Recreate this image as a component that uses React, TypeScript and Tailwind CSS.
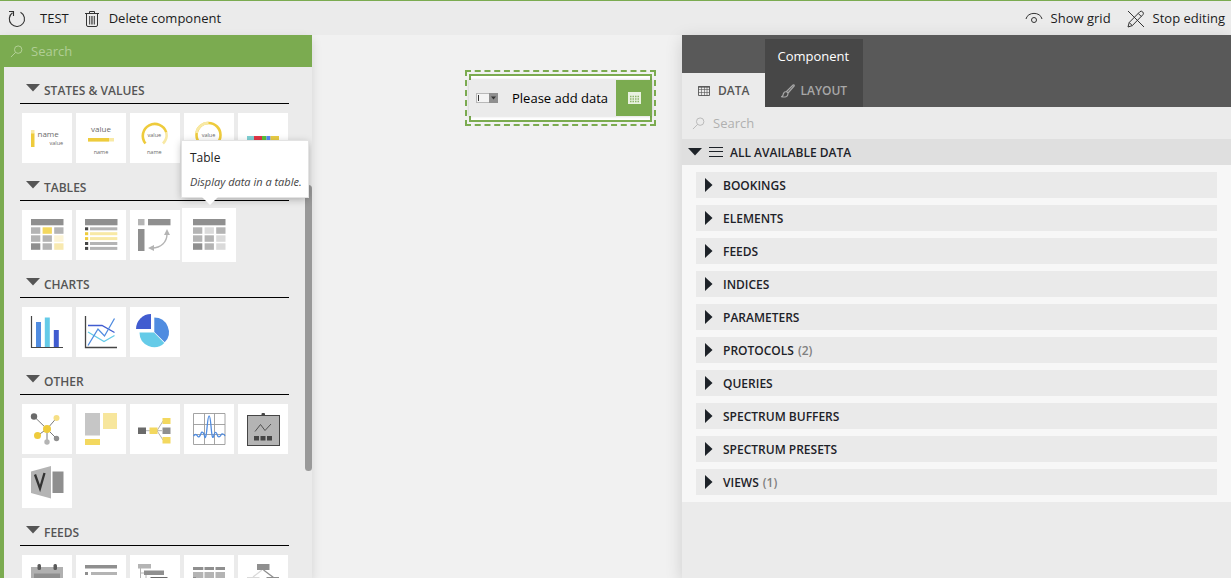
import React, { useState } from 'react';

interface Tile {
  name: string;
  desc: string;
  art: React.ReactNode;
}

interface Section {
  title: string;
  tiles: Tile[];
}

const Cells = ({ fills }: { fills: string[] }) => (
  <>
    <rect x="9" y="9" width="32.500" height="6.300" fill="#8f8f8f" />
    {fills.map((f, i) => (
      <rect key={i} x={9 + (i % 3) * 11.6} y={17.3 + Math.floor(i / 3) * 8} width="9.300" height="6.500" fill={f} />
    ))}
  </>
);

const SECTIONS: Section[] = [
  {
    title: 'STATES & VALUES',
    tiles: [
      {
        name: 'State',
        desc: 'Display a state.',
        art: (
          <>
            <rect x="9" y="17" width="3.5" height="4" fill="#f8e9a5" />
            <rect x="9" y="20.5" width="3.5" height="13.5" fill="#eecb3c" />
            <text x="15.5" y="24" fontSize="8" fill="#6a6a6a">name</text>
            <text x="27.5" y="32" fontSize="5.5" fill="#6a6a6a">value</text>
          </>
        ),
      },
      {
        name: 'Progress bar',
        desc: 'Display a value.',
        art: (
          <>
            <text x="25" y="19" fontSize="8" textAnchor="middle" fill="#6a6a6a">value</text>
            <rect x="12" y="25" width="26" height="3.5" fill="#f8e9a5" />
            <rect x="12" y="25" width="21" height="3.5" fill="#eecb3c" />
            <text x="25" y="41" fontSize="5.5" textAnchor="middle" fill="#6a6a6a">name</text>
          </>
        ),
      },
      {
        name: 'Gauge',
        desc: 'Display a gauge.',
        art: (
          <>
            <path d="M15.5 30.5A12 12 0 1 1 36.3 19.5" fill="none" stroke="#eecb3c" strokeWidth="2.6" />
            <path d="M36.3 19.5A12 12 0 0 1 33 30.5" fill="none" stroke="#f8e9a5" strokeWidth="2.6" />
            <text x="24.3" y="24" fontSize="5.5" textAnchor="middle" fill="#6a6a6a">value</text>
            <text x="24.3" y="41" fontSize="5.5" textAnchor="middle" fill="#6a6a6a">name</text>
          </>
        ),
      },
      {
        name: 'Ring',
        desc: 'Display a ring.',
        art: (
          <>
            <circle cx="24.500" cy="22" r="12" fill="none" stroke="#eecb3c" strokeWidth="2.6" />
            <path d="M12.500 20A12 12 0 0 1 24.500 10" fill="none" stroke="#f8e9a5" strokeWidth="2.8" />
            <text x="24.500" y="24" fontSize="5.5" textAnchor="middle" fill="#6a6a6a">value</text>
          </>
        ),
      },
      {
        name: 'Timeline',
        desc: 'Display states over time.',
        art: (
          <>
            <rect x="9" y="23" width="7" height="5" fill="#7fd0d3" />
            <rect x="16" y="23" width="8" height="5" fill="#e03545" />
            <rect x="24" y="23" width="4.5" height="5" fill="#5bc236" />
            <rect x="28.5" y="23" width="4" height="5" fill="#5588f5" />
            <rect x="32.5" y="23" width="8.5" height="5" fill="#e8cc45" />
          </>
        ),
      },
    ],
  },
  {
    title: 'TABLES',
    tiles: [
      {
        name: 'Alarm table',
        desc: 'Display alarms in a table.',
        art: <Cells fills={['#b4b4b4', '#f3d85f', '#b4b4b4', '#b4b4b4', '#b4b4b4', '#fcf4d6', '#8f8f8f', '#b4b4b4', '#f8e9b0']} />,
      },
      {
        name: 'List',
        desc: 'Display data in a list.',
        art: (
          <>
            <rect x="9" y="9" width="32.500" height="6.300" fill="#8f8f8f" />
            {[0, 1, 2, 3, 4].map((i) => {
              const hot = i === 1 || i === 2;
              return (
                <g key={i}>
                  <rect x="9" y={17.3 + i * 4.9} width="3.200" height="3" fill={hot ? '#eecb3c' : '#454545'} />
                  <rect x="14" y={17.3 + i * 4.9} width="27.300" height="3" fill={hot ? '#f8e9a5' : '#b4b4b4'} />
                </g>
              );
            })}
          </>
        ),
      },
      {
        name: 'Pivot table',
        desc: 'Display data in a pivot table.',
        art: (
          <>
            <rect x="8" y="9" width="6.5" height="6.300" fill="#b4b4b4" />
            <rect x="18" y="9" width="22.5" height="6.300" fill="#8f8f8f" />
            <rect x="8" y="19" width="6.5" height="22" fill="#8f8f8f" />
            <path d="M22 38C31 38 37 32 37 24" fill="none" stroke="#b4b4b4" strokeWidth="1.4" />
            <path d="M18 38l6-3v6zM37 19l-3 6h6z" fill="#b4b4b4" />
          </>
        ),
      },
      {
        name: 'Table',
        desc: 'Display data in a table.',
        art: <Cells fills={['#b4b4b4', '#dadada', '#b4b4b4', '#b4b4b4', '#b4b4b4', '#dadada', '#8f8f8f', '#b4b4b4', '#dadada']} />,
      },
    ],
  },
  {
    title: 'CHARTS',
    tiles: [
      {
        name: 'Column chart',
        desc: 'Display a column chart.',
        art: (
          <>
            <path d="M14 15h5v25h-5z" fill="#508ce0" />
            <path d="M22.800 10.500h5V40h-5z" fill="#65cbe8" />
            <path d="M31.800 23h5v17h-5z" fill="#415cd0" />
            <path d="M9.5 9v31.5H41" fill="none" stroke="#454545" strokeWidth="1.2" />
          </>
        ),
      },
      {
        name: 'Line chart',
        desc: 'Display a line chart.',
        art: (
          <g fill="none" strokeWidth="1.3">
            <path d="M12 25l16 9.5 10.500-6" stroke="#65cbe8" />
            <path d="M12 18.500h14l12.500 7" stroke="#415cd0" />
            <path d="M12 38.500L22 22l6.500 7 10-17.500" stroke="#508ce0" />
            <path d="M9.500 9v31.500H41" stroke="#454545" />
          </g>
        ),
      },
      {
        name: 'Pie chart',
        desc: 'Display a pie chart.',
        art: (
          <>
            <path d="M24.300 25V10.500A14.600 14.600 0 0 1 34.700 35.300z" fill="#508ce0" />
            <path d="M24 25.500L34.300 35.900A14.600 14.600 0 0 1 9.500 25.500z" fill="#65cbe8" />
            <path d="M21 22H6A15 15 0 0 1 21 7z" fill="#415cd0" />
          </>
        ),
      },
    ],
  },
  {
    title: 'OTHER',
    tiles: [
      {
        name: 'Node edge graph',
        desc: 'Display nodes and edges.',
        art: (
          <>
            <path d="M25 25L12 12.500M25 25l9.500-11M25 25l-9.500 6.500M25 25v13M25 25l9.500 9.500" stroke="#6a6a6a" strokeWidth="0.9" />
            <circle cx="12" cy="12.500" r="3.200" fill="#6a6a6a" />
            <circle cx="34.500" cy="14" r="3" fill="#f6df85" />
            <circle cx="15.500" cy="31.500" r="3.500" fill="#eecb3c" />
            <circle cx="25" cy="38" r="2.700" fill="#b4b4b4" />
            <circle cx="34.500" cy="34.500" r="2.700" fill="#8f8f8f" />
            <circle cx="25" cy="25" r="4" fill="#eecb3c" />
          </>
        ),
      },
      {
        name: 'Grid',
        desc: 'Display a grid.',
        art: (
          <>
            <rect x="9" y="9" width="15" height="22.500" fill="#c6c6c6" />
            <rect x="27" y="9" width="14" height="16" fill="#f7e69c" />
            <rect x="9" y="35" width="15" height="6" fill="#f3d85f" />
          </>
        ),
      },
      {
        name: 'Service chain',
        desc: 'Display a service chain.',
        art: (
          <>
            <path d="M16 26.700h16M27 26.700L33 17M27 26.700L33 36" fill="none" stroke="#b4b4b4" />
            <rect x="8" y="23.500" width="8" height="6.500" fill="#6a6a6a" />
            <rect x="19.500" y="23.500" width="8" height="6.500" fill="#f3d85f" />
            <rect x="32.500" y="14" width="8" height="6" fill="#f3d85f" />
            <rect x="32.500" y="23.500" width="8" height="6.500" fill="#8f8f8f" />
            <rect x="32.500" y="33" width="8" height="6.500" fill="#f3d85f" />
          </>
        ),
      },
      {
        name: 'Spectrum analyzer',
        desc: 'Display a spectrum.',
        art: (
          <>
            <path d="M9.500 9.500h31.500v31h-31.500zM20.500 9.500v31M30.500 9.500v31M9.500 20.500h31.500M9.500 30.500h31.500" fill="none" stroke="#9a9a9a" strokeWidth="0.9" />
            <path
              d="M9.500 32C11 30 12.500 30 13.500 32S16 32.500 17 29.500 20 29 20.500 32C21.500 37 22.500 30 23.200 22 24.500 8.500 25.800 8.500 27 22 27.800 31 28.500 37 30 31 31 27 32.500 28 33.300 31S36 33 37 31 40 30 41 32"
              fill="none"
              stroke="#508ce0"
              strokeWidth="1.300"
            />
          </>
        ),
      },
      {
        name: 'Maintenance settings',
        desc: 'Display settings.',
        art: (
          <>
            <rect x="23.500" y="9" width="3.500" height="3" rx="1" fill="#454545" />
            <rect x="9.500" y="11.500" width="32" height="30" fill="#b4b4b4" stroke="#454545" />
            <path d="M17 27.500l5.500-7 4.500 6 6-6.500" fill="none" stroke="#454545" strokeWidth="0.900" />
            <path d="M16 32h5v4.500h-5zM22.500 32h5v4.500h-5zM29 32h5v4.500h-5z" fill="#454545" />
          </>
        ),
      },
      {
        name: 'Visual overview',
        desc: 'Display a visual overview.',
        art: (
          <>
            <path d="M9 13.500L29 8v32.500L9 35z" fill="#b4b4b4" />
            <rect x="30.500" y="13.500" width="11" height="21.500" fill="#8f8f8f" />
            <path d="M13 16.500l5 14 4.500-15.500" fill="none" stroke="#333" strokeWidth="2.300" />
          </>
        ),
      },
    ],
  },
  {
    title: 'FEEDS',
    tiles: [
      {
        name: 'Calendar',
        desc: 'Pick a date.',
        art: (
          <>
            <rect x="9" y="12" width="32" height="29" fill="#b0b0b0" />
            <rect x="12" y="18.500" width="26" height="19" fill="#8f8f8f" />
            <rect x="15.500" y="9" width="3.500" height="6" rx="1.500" fill="#5a5a5a" />
            <rect x="31.500" y="9" width="3.500" height="6" rx="1.500" fill="#5a5a5a" />
          </>
        ),
      },
      {
        name: 'List feed',
        desc: 'Pick from a list.',
        art: (
          <>
            <rect x="9" y="10" width="32" height="3.500" fill="#8f8f8f" />
            <path d="M9 17h3v3H9zM9 23h3v3H9zM9 29h3v3H9z" fill="#8f8f8f" />
            <path d="M15 17h26v3H15zM15 23h26v3H15zM15 29h26v3H15z" fill="#b4b4b4" />
          </>
        ),
      },
      {
        name: 'Tree feed',
        desc: 'Pick from a tree.',
        art: (
          <>
            <path d="M10.500 13v22M10.500 18h4M16 20v6h5" fill="none" stroke="#b4b4b4" />
            <rect x="8" y="9" width="13" height="4.500" fill="#b4b4b4" />
            <rect x="14" y="15.500" width="20" height="4.500" fill="#8f8f8f" />
            <rect x="20.500" y="22" width="17" height="5" fill="#6a6a6a" />
          </>
        ),
      },
      {
        name: 'Time feed',
        desc: 'Pick a time slot.',
        art: (
          <>
            <path d="M9 12h10.300v3H9zM20.500 12h9.500v3h-9.500zM31.500 12h9.500v3h-9.500z" fill="#8f8f8f" />
            <path d="M9 17h10.300v7H9zM20.500 17h9.500v7h-9.500zM31.500 17h9.500v7h-9.500z" fill="#b4b4b4" />
            <rect x="9" y="22" width="3" height="6" fill="#8f8f8f" />
          </>
        ),
      },
      {
        name: 'Trigger feed',
        desc: 'Trigger an update.',
        art: (
          <>
            <path d="M24 15l-9 7" stroke="#dadada" strokeWidth="1.300" />
            <path d="M25.500 15l10 7.500" stroke="#8f8f8f" strokeWidth="1.300" />
            <rect x="19" y="9" width="12.500" height="6" fill="#8f8f8f" />
            <rect x="9" y="22" width="12.500" height="6" fill="#dadada" />
            <rect x="28.500" y="22" width="12.500" height="6" fill="#8f8f8f" />
          </>
        ),
      },
    ],
  },
];

const DATA_SOURCES: { label: string; count?: number }[] = [
  { label: 'BOOKINGS' },
  { label: 'ELEMENTS' },
  { label: 'FEEDS' },
  { label: 'INDICES' },
  { label: 'PARAMETERS' },
  { label: 'PROTOCOLS', count: 2 },
  { label: 'QUERIES' },
  { label: 'SPECTRUM BUFFERS' },
  { label: 'SPECTRUM PRESETS' },
  { label: 'VIEWS', count: 1 },
];

const SearchIcon = ({ className }: { className: string }) => (
  <svg viewBox="0 0 14 14" className={className} fill="none" stroke="currentColor">
    <circle cx="8.800" cy="5" r="4" />
    <path d="M6 8L1 13" />
  </svg>
);

const TriangleDown = ({ className }: { className: string }) => (
  <svg viewBox="0 0 14 8" className={className} fill="currentColor">
    <path d="M0 0h14L7 7.500z" />
  </svg>
);

const GridIcon = ({ className }: { className: string }) => (
  <svg viewBox="0 0 12 12" className={className} fill="none" stroke="currentColor">
    <path d="M.5 1.500h11v9H.5z" strokeWidth="0.900" />
    <path d="M0 2h12" strokeWidth="1.200" />
    <path d="M.5 4.500h11M.5 7.500h11M3.500 2v9M6.500 2v9M9 2v9" strokeWidth="0.600" />
  </svg>
);

// ── top bar ──
const Toolbar = () => (
  <header className="flex h-[35px] shrink-0 items-center justify-between border-t border-[#7bab50] bg-[#ebebeb] pl-2 pr-1.5 pt-0.5 text-[#1c1c1c]">
    <div className="flex items-center gap-4">
      <button className="flex items-center gap-[14px]">
        <svg viewBox="0 0 18 18" className="size-[18px]" fill="none" stroke="#333" strokeWidth="1.100">
          <path d="M4.500 2.700A7.600 7.600 0 1 0 12.500 2.200M1 1.500h4.500V6" />
        </svg>
        TEST
      </button>
      <button className="flex items-center gap-2.5">
        <svg viewBox="0 0 14 18" className="h-[18px] w-[14px]" fill="none" stroke="#333">
          <path d="M0 3.500h14M4.500 3.500V1.500h5v2M1.500 3.500v11.500q0 1.500 1.500 1.500h8q1.500 0 1.500-1.500V3.500" />
          <path d="M4.500 6v8.500M6.300 6v8.500M7.800 6v8.500M9.500 6v8.500" strokeWidth="0.800" />
        </svg>
        Delete component
      </button>
    </div>
    <div className="flex items-center gap-4">
      <button className="flex items-center gap-2">
        <svg viewBox="0 0 18 18" className="size-[18px]" fill="none" stroke="#333">
          <path d="M1 9C2.500 1.500 15.500 1.500 17 9" />
          <circle cx="9" cy="10" r="2.500" />
        </svg>
        Show grid
      </button>
      <button className="flex items-center gap-2">
        <svg viewBox="0 0 18 18" className="size-[18px]" fill="none" stroke="#333">
          <path d="M1 17l1.200-4.500L13 1.600q1.400-1 2.700.3t.3 2.700L5.300 15.600zM11.300 3.500l3 3M2.200 12.500l3.100 3.100M1 1l16 16" />
        </svg>
        Stop editing
      </button>
    </div>
  </header>
);

// ── component library on the left ──
const Tooltip = ({ tile }: { tile: Tile }) => (
  <div role="tooltip" className="absolute bottom-full left-0 z-10 mb-[11px] w-max bg-white pb-[3px] pl-2 pr-1.5 pt-[5px] text-left shadow-[0_0_0_1px_#e3e3e3,0_2px_8px_rgba(0,0,0,0.3)]">
    <p className="text-xs leading-6 text-[#222]">{tile.name}</p>
    <p className="text-[11px] italic leading-6 text-[#444]">{tile.desc}</p>
    <svg viewBox="0 0 16 8" className="absolute left-5 top-full h-2 w-4" fill="#fff">
      <path d="M0 0h16L8 8z" />
    </svg>
  </div>
);

const Library = () => {
  const [hovered, setHovered] = useState('Table');

  return (
    <aside className="z-10 flex w-[312px] shrink-0 flex-col shadow-[0_4px_10px_rgba(0,0,0,0.12)]">
      <label className="flex h-8 shrink-0 items-center gap-2 bg-[#7bab50] pl-2.5 pt-px text-[#b7d39c]">
        <SearchIcon className="size-[13px]" />
        <input aria-label="Search components" placeholder="Search" className="min-w-0 flex-1 bg-transparent text-white outline-none placeholder:text-[#b0ce95]" />
      </label>
      <div className="relative min-h-0 flex-1 overflow-hidden border-l-4 border-[#7bab50] bg-[#ebebeb] pl-4 pr-[23px] pt-[9px]">
        {SECTIONS.map((section) => (
          <section key={section.title} className="mb-2.5">
            <h2>
              <button className="flex h-7 w-full items-start gap-1 border-b border-black pl-1.5 pt-[5px] text-xs font-semibold leading-5 text-[#555]">
                <TriangleDown className="mt-[3px] h-2 w-[14px]" />
                {section.title}
              </button>
            </h2>
            <div className="mt-[9px] flex flex-wrap gap-1 pl-0.5">
              {section.tiles.map((tile) => {
                const active = tile.name === hovered;
                return (
                  <button
                    key={tile.name}
                    aria-label={tile.name}
                    onMouseEnter={() => setHovered(tile.name)}
                    className={`relative flex items-center justify-center bg-white ${active ? '-m-0.5 size-[54px]' : 'size-[50px]'}`}
                  >
                    <svg viewBox="0 0 50 50" className="size-[50px]">{tile.art}</svg>
                    {active && <Tooltip tile={tile} />}
                  </button>
                );
              })}
            </div>
          </section>
        ))}
        <div className="absolute right-0 top-[23%] h-[56%] w-[7px] rounded-full bg-[#999]" />
      </div>
    </aside>
  );
};

// ── dashboard canvas ──
const Canvas = () => (
  <main className="min-w-0 flex-[370_1_0%] bg-[#f1f1f1]">
    <div className="ml-[153px] mt-[35px] w-max border-2 border-dashed border-[#7bab50] p-0.5">
      <div className="border-2 border-[#7bab50] bg-white py-1">
        <div className="-mx-0.5 flex h-9 items-center bg-[#ebebeb] pl-[7px] text-black shadow-[0_0_3px_rgba(0,0,0,0.2)]">
          <svg viewBox="0 0 22 10" className="h-2.5 w-[22px]">
            <rect x="0.500" y="0.500" width="21" height="9" fill="#f4f4f4" stroke="#b8b8b8" />
            <rect x="13" y="0" width="9" height="10" fill="#8f8f8f" />
            <path d="M2.500 2v6" stroke="#333" />
            <path d="M15 3.500h5l-2.500 3z" fill="#333" />
          </svg>
          <span className="ml-[14px] mr-2 pt-0.5">Please add data</span>
          <button aria-label="Add data" className="flex size-9 items-center justify-center bg-[#7bab50]">
            <svg viewBox="0 0 13 12" className="h-3 w-[13px]">
              <rect width="13" height="12" fill="#e9f2e0" />
              <path d="M2 4.500h9M2 7h9M2 9.500h9" stroke="#8fb56b" strokeWidth="1.300" strokeDasharray="1.500 1" />
            </svg>
          </button>
        </div>
      </div>
    </div>
  </main>
);

// ── settings on the right ──
const Settings = () => (
  <aside className="flex min-w-0 flex-[549_1_0%] flex-col bg-[#ebebeb] shadow-[0_4px_16px_rgba(0,0,0,0.15)]">
    <div className="flex h-[72px] shrink-0 items-end bg-[#595959] text-xs font-semibold">
      <button className="flex h-[34px] items-center gap-2 bg-[#ebebeb] px-4 pt-0.5 text-[#555]">
        <GridIcon className="size-3" />
        DATA
      </button>
      <div className="flex h-[68px] flex-col bg-[#474747]">
        <p className="flex h-[34px] items-center px-3 pt-0.5 text-[13px] font-normal text-white">Component</p>
        <button className="flex h-[34px] items-center gap-[5px] px-4 pt-0.5 text-[#a8a8a8]">
          <svg viewBox="0 0 14 14" className="size-[14px]" fill="none" stroke="currentColor" strokeWidth="1.200">
            <path d="M5.500 7.500L12 1q1.500-.5 1.200 1L7 9zM5.500 7.500L7 9q.2 3-2 3.700-2 .6-4.500 0Q2.300 12 2.300 10q.6-2.500 3.200-2.500z" />
          </svg>
          LAYOUT
        </button>
      </div>
    </div>
    <label className="flex h-8 shrink-0 items-center gap-2 pl-2.5 pt-px text-[#b5b5b5]">
      <SearchIcon className="size-[13px]" />
      <input aria-label="Search data" placeholder="Search" className="min-w-0 flex-1 bg-transparent text-[#222] outline-none placeholder:text-[#b0b0b0]" />
    </label>
    <button className="flex h-[26px] shrink-0 items-center bg-[#dfdfdf] pl-1.5 text-xs font-semibold text-[#1d2228]">
      <TriangleDown className="h-2 w-[14px]" />
      <svg viewBox="0 0 14 10" className="mx-[7px] h-2.5 w-[14px]" stroke="currentColor">
        <path d="M0 .5h14M0 4.500h14M0 9.500h14" />
      </svg>
      <span className="pt-0.5">ALL AVAILABLE DATA</span>
    </button>
    <ul className="flex flex-col gap-[7px] bg-[#f7f7f7] px-[14px] py-[7px]">
      {DATA_SOURCES.map(({ label, count }) => (
        <li key={label}>
          <button className="flex h-[26px] w-full items-center bg-[#eaeaea] pl-[9px] text-xs font-semibold text-[#1d2228]">
            <svg viewBox="0 0 8 14" className="mr-2.5 h-[14px] w-2" fill="currentColor">
              <path d="M0 0l7.500 7L0 14z" />
            </svg>
            <span className="pt-0.5">{label}</span>
            {count && <span className="ml-1 pt-0.5 text-[#808080]">({count})</span>}
          </button>
        </li>
      ))}
    </ul>
  </aside>
);

export default function App() {
  return (
    <div className="flex h-screen flex-col overflow-hidden bg-[#f1f1f1] font-['Open_Sans','Noto_Sans',sans-serif] text-[13px]">
      <Toolbar />
      <div className="flex min-h-0 flex-1">
        <Library />
        <Canvas />
        <Settings />
      </div>
    </div>
  );
}
